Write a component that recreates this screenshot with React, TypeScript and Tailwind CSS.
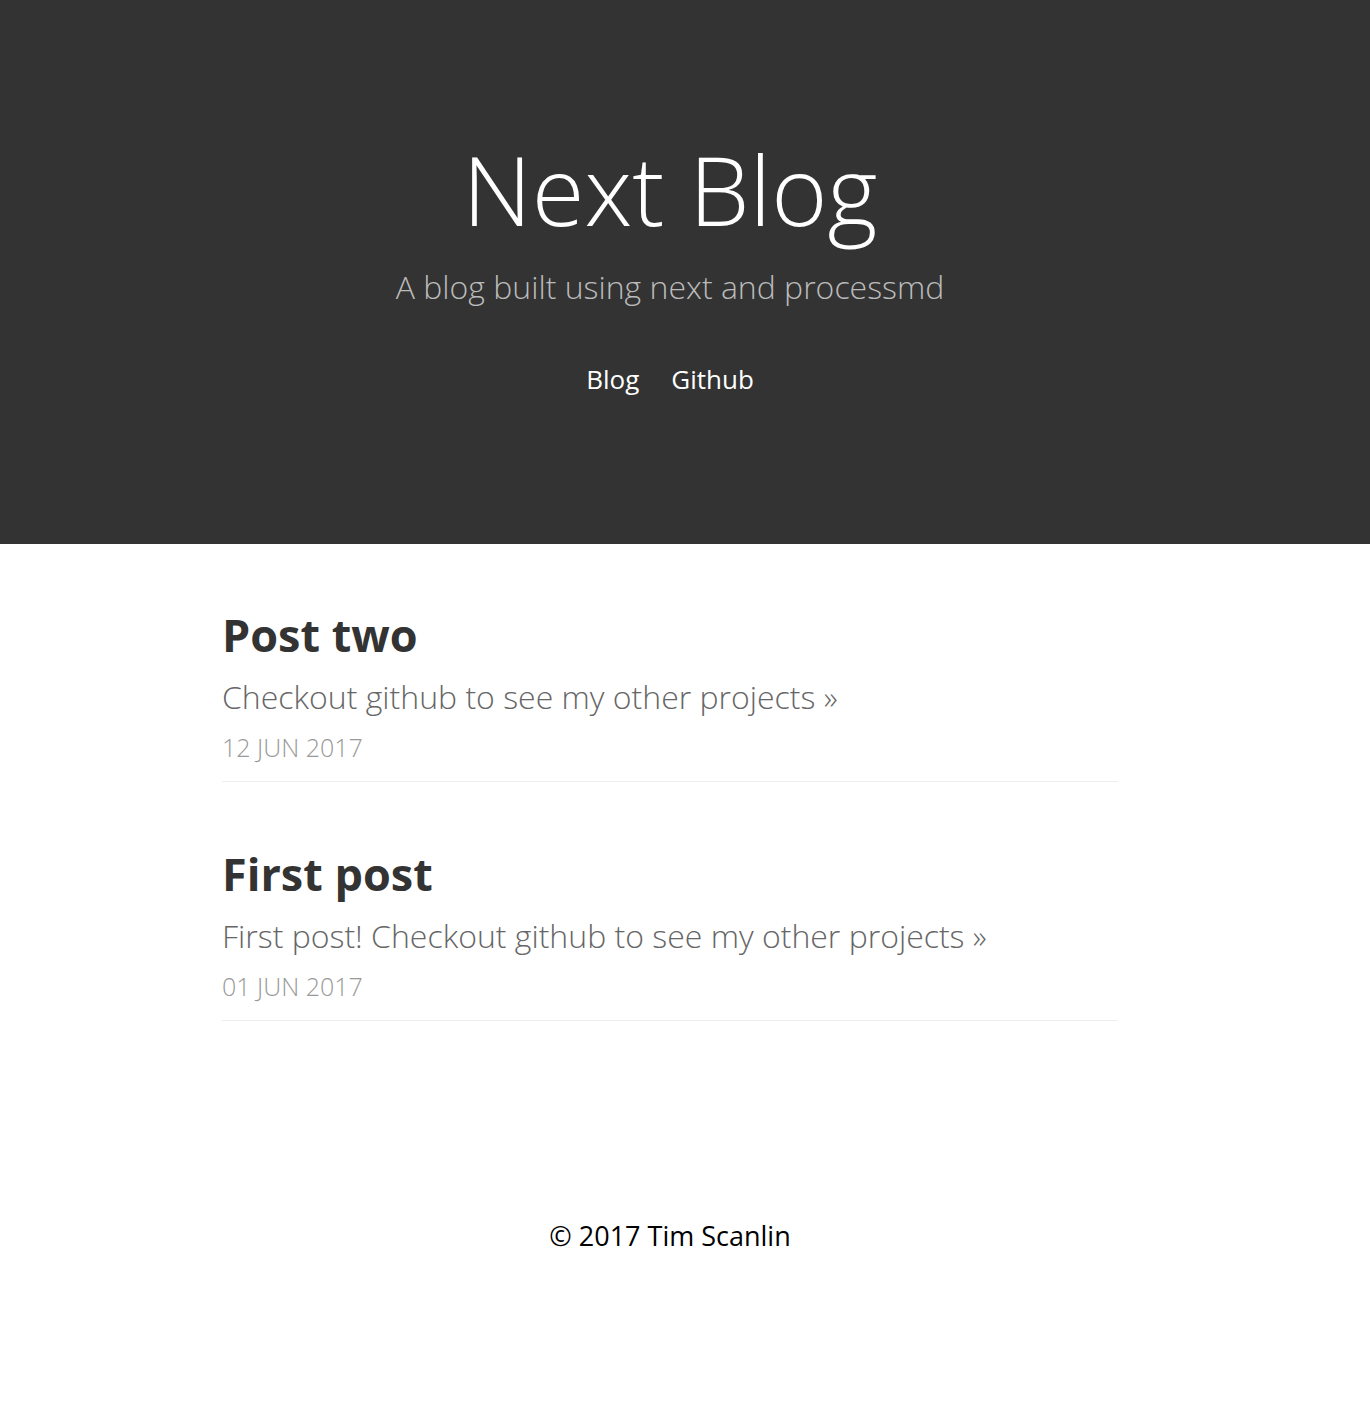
import React from 'react';

const posts = [
  { title: 'Post two', summary: 'Checkout github to see my other projects »', date: '12 JUN 2017' },
  { title: 'First post', summary: 'First post! Checkout github to see my other projects »', date: '01 JUN 2017' },
];

export default function App() {
  return (
    <div className="min-h-[1424px] bg-white" style={{ fontFamily: '"Open Sans", sans-serif' }}>
      <header className="h-[544px] bg-[#333333] pr-[30px] pt-[141px] text-center">
        <h1 className="text-[96px] font-light leading-none text-white">Next Blog</h1>
        <p className="mt-[34px] text-[32px] font-light leading-none text-[#bbbbbb]">A blog built using next and processmd</p>
        <nav className="mt-[63px] flex justify-center gap-[32px] text-[26px] leading-none text-white">
          <a href="#">Blog</a>
          <a href="#">Github</a>
        </nav>
      </header>

      <main className="pr-[30px]">
        <div className="mx-auto w-[896px] pt-[60px]">
          {posts.map((post) => (
            <article key={post.title} className="mb-[61px] border-b border-[#eeeeee] pb-[21px] pt-[8px]">
              <h2 className="text-[45px] font-bold leading-none text-[#333333]">{post.title}</h2>
              <p className="mt-[24px] text-[32px] font-light leading-none text-[#666666]">{post.summary}</p>
              <p className="mt-[22px] text-[25px] font-light leading-none text-[#999999]">{post.date}</p>
            </article>
          ))}
        </div>
      </main>

      <footer className="pr-[30px] pt-[140px] text-center text-[27px] leading-none text-black">
        © 2017 Tim Scanlin
      </footer>
    </div>
  );
}
